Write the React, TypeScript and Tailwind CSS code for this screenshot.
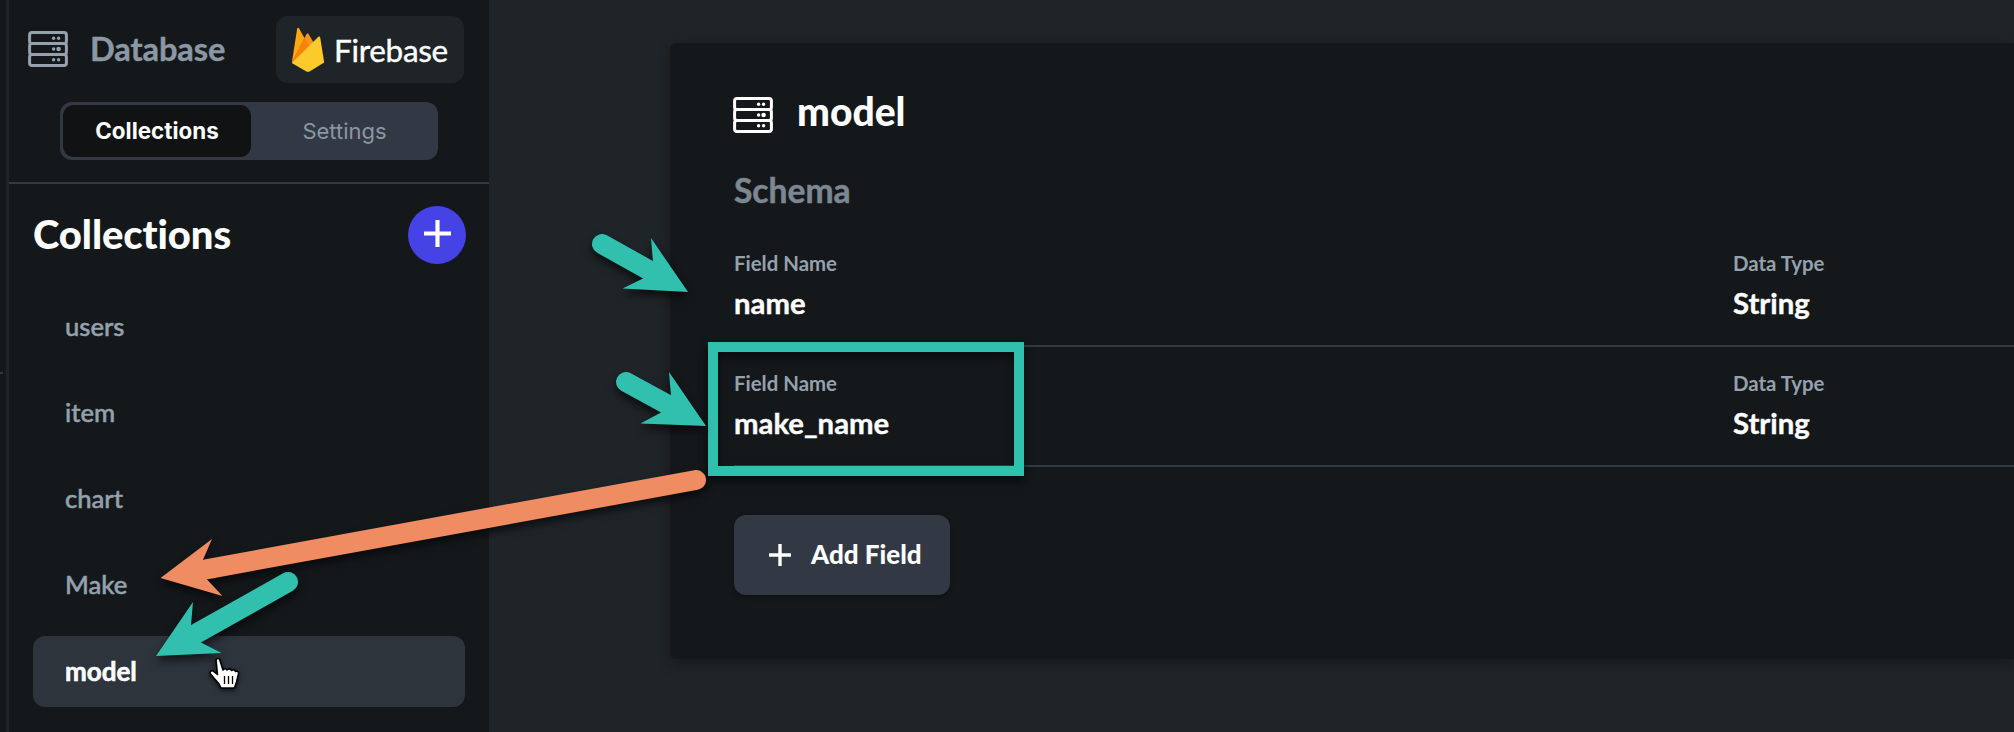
import React from "react";

const collections = ["users", "item", "chart", "Make", "model"];
const fields = [
  { name: "name", type: "String" },
  { name: "make_name", type: "String" },
];

function DatabaseIcon({ className }: { className: string }) {
  return (
    <svg viewBox="0 0 40 36" className={className} fill="none" stroke="currentColor" strokeWidth="3">
      <rect x="1.6" y="1.6" width="36.8" height="11" rx="2.4" />
      <rect x="1.6" y="12.6" width="36.8" height="10.8" rx="2.4" />
      <rect x="1.6" y="23.4" width="36.8" height="11" rx="2.4" />
      <g fill="currentColor" stroke="none">
        <circle cx="25.6" cy="7.2" r="1.7" />
        <circle cx="30.6" cy="7.2" r="1.7" />
        <circle cx="25.6" cy="18" r="1.7" />
        <circle cx="30.6" cy="18" r="2.3" />
        <circle cx="25.6" cy="28.8" r="1.7" />
        <circle cx="30.6" cy="28.8" r="1.7" />
      </g>
    </svg>
  );
}

function FirebaseLogo() {
  return (
    <svg viewBox="0 0 34 46" className="h-[46px] w-[34px]">
      <path d="M0.8 36 L13.4 11 L15.6 7 Q16.6 5.6 17.6 7 L24 18Z" fill="#F9921A" />
      <path d="M0.8 36 L13.4 11 L18.6 20Z" fill="#F5820A" />
      <path d="M0.8 36 L6.2 1.4 Q7 0 8 1.2 L13.4 11Z" fill="#FFA712" />
      <path d="M0.8 36 L27.4 9.8 Q28.8 8.8 29.2 10.4 L33.2 35.6 L18.6 44.4 Q17 45.2 15.4 44.4Z" fill="#FCCA2C" />
    </svg>
  );
}

function Plus({ className }: { className: string }) {
  return (
    <svg viewBox="0 0 28 28" className={className} stroke="currentColor" strokeWidth="4.3">
      <path d="M14 0V28M0 14H28" />
    </svg>
  );
}

function Annotations() {
  return (
    <svg viewBox="0 0 2014 732" className="pointer-events-none absolute left-0 top-0 h-[732px] w-[2014px]">
      <g className="drop-shadow-[0_5px_4px_rgba(0,0,0,0.6)]">
        <rect x="713" y="347" width="306" height="124" fill="none" stroke="#31BFAE" strokeWidth="10" />
      </g>
      <g className="drop-shadow-[0_5px_4px_rgba(0,0,0,0.6)]" fill="#EF8C62">
        <path d="M696 480 L206 569.3" stroke="#EF8C62" strokeWidth="20" strokeLinecap="round" />
        <path d="M160.500 578 L212 539 L202 562 L207 579.500 L222.500 596Z" />
      </g>
      <g className="drop-shadow-[0_5px_4px_rgba(0,0,0,0.6)]" fill="#31BFAE" stroke="none">
        <path d="M288 582 L192 636" stroke="#31BFAE" strokeWidth="20" strokeLinecap="round" />
        <path d="M156 656 L193 602 L191 625 L201 642.500 L221.500 653Z" />
        <path d="M602 244 L652 272" stroke="#31BFAE" strokeWidth="20" strokeLinecap="round" />
        <path d="M688 292 L651 238 L653 262 L643 278.500 L622.500 288.500Z" />
        <path d="M626 382 L670 406" stroke="#31BFAE" strokeWidth="20" strokeLinecap="round" />
        <path d="M706 426 L669 372 L671 396 L661 412.500 L640.500 423.500Z" />
      </g>
    </svg>
  );
}

function HandCursor() {
  return (
    <svg viewBox="0 0 32 36" className="absolute left-[208px] top-[656px] h-[36px] w-[32px] drop-shadow-[0_2px_2px_rgba(0,0,0,0.6)]">
      <path
        d="M8 4 Q9 1.600 11.500 3 L15 14 Q17 11.500 19 14 Q22 11.500 23.500 14.500 Q26.500 12.500 27.500 15.500 Q31 14.500 30.500 18 L28.500 26 L26.500 32 H13 L11 28 L2.500 18 Q1 14.500 5 14.800 L9.500 18.500Z"
        fill="#fff"
        stroke="#000"
        strokeWidth="1.6"
        strokeLinejoin="round"
      />
      <path d="M16.500 20V28M20.500 20V28M24.500 20V28" stroke="#000" strokeWidth="1.300" />
    </svg>
  );
}

function FieldCell({ label, value }: { label: string; value: string }) {
  return (
    <div>
      <div className="h-[34px] text-[20.4px] font-bold leading-[34px] text-[#95a1ac]">{label}</div>
      <div className="mt-[3px] text-[29.3px] font-bold leading-[40px] [-webkit-text-stroke:0.4px]">{value}</div>
    </div>
  );
}

export default function App() {
  return (
    <div className="relative flex h-[732px] w-[2014px] overflow-hidden bg-[#1f2428] font-['Lato',sans-serif] text-white [font-variant-ligatures:none]">
      <div className="w-[6px] shrink-0 bg-[#14181b] pt-[372px]">
        <div className="h-[2px] w-[3px] bg-[#323944]" />
      </div>
      <aside className="w-[483px] shrink-0 border-l-[3px] border-[#1f2428] bg-[#14181b]">
        <header className="h-[184px] border-b-2 border-[#323b45] pt-[16px]">
          <div className="flex h-[67px] items-center pl-[19px]">
            <DatabaseIcon className="mb-[2px] h-[36px] w-[40px] text-[#95a1ac]" />
            <h1 className="mb-px ml-[22px] w-[186px] text-[32.6px] font-bold tracking-[-0.1px] text-[#8b97a2] [-webkit-text-stroke:0.4px]">Database</h1>
            <div className="flex h-[67px] w-[188px] items-center rounded-[12px] bg-[#1f2428] pl-[15px]">
              <FirebaseLogo />
              <span className="ml-[9px] mt-[3px] text-[31.5px] tracking-[-0.3px] [-webkit-text-stroke:0.4px]">Firebase</span>
            </div>
          </div>
          <div className="ml-[51px] mt-[19px] flex h-[58px] w-[378px] rounded-[12px] bg-[#323844] p-[3px] font-['Inter',sans-serif] text-[21px]">
            <div className="flex w-[188px] items-center justify-center rounded-[11px] bg-[#101213] text-[22.4px] font-bold">Collections</div>
            <div className="flex flex-1 items-center justify-center pl-[3px] text-[22px] text-[#8b97a2]">Settings</div>
          </div>
        </header>
        <div className="flex h-[101px] items-center pl-[24px] pr-[23px]">
          <h2 className="flex-1 pb-px text-[40px] font-black tracking-[-0.1px]">Collections</h2>
          <button className="flex size-[58px] items-center justify-center rounded-full bg-[#4542e6]">
            <Plus className="mb-[2px] size-[27px]" />
          </button>
        </div>
        <ul className="px-[24px] pt-[7px]">
          {collections.map((item) => (
            <li
              key={item}
              className={
                item === "model"
                  ? "mb-[16px] flex h-[71px] items-center rounded-[12px] bg-[#2d343c] pb-px pl-[32px] text-[26px] font-bold [-webkit-text-stroke:0.6px]"
                  : "mb-[16px] flex h-[70px] items-center pb-[2px] pl-[32px] text-[25.6px] font-medium text-[#95a1ac] [-webkit-text-stroke:0.5px]"
              }
            >
              {item}
            </li>
          ))}
        </ul>
      </aside>
      <main className="flex-1 pl-[181px] pt-[43px]">
        <section className="h-[616px] rounded-l-[6px] bg-[#14181b] pl-[64px] pt-[42px] shadow-[0_4px_14px_rgba(0,0,0,0.3)]">
          <div className="flex h-[56px] items-center">
            <DatabaseIcon className="-ml-px mt-[4px] h-[36px] w-[40px]" />
            <h2 className="mb-[4px] ml-[24px] text-[39px] font-black">model</h2>
          </div>
          <h3 className="mb-[15px] mt-[27px] h-[44px] text-[33.6px] font-bold leading-[44px] text-[#7c8791] [-webkit-text-stroke:0.5px]">Schema</h3>
          {fields.map((f) => (
            <div key={f.name} className="grid h-[120px] grid-cols-[999px_1fr] border-b-2 border-[#323b45] pt-[19px]">
              <FieldCell label="Field Name" value={f.name} />
              <FieldCell label="Data Type" value={f.type} />
            </div>
          ))}
          <button className="mt-[48px] flex h-[80px] w-[216px] items-center rounded-[12px] bg-[#323844] pl-[35px] text-[26px] font-black shadow-[0_2px_4px_rgba(0,0,0,0.3)]">
            <Plus className="size-[22px]" />
            <span className="mb-px ml-[20px]">Add Field</span>
          </button>
        </section>
      </main>
      <Annotations />
      <HandCursor />
    </div>
  );
}
